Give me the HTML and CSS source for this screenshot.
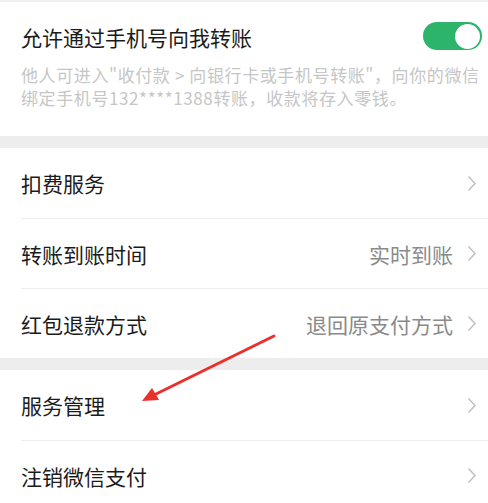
FILE: index.html
```html
<!DOCTYPE html>
<html lang="zh">
<head>
<meta charset="utf-8">
<link rel="stylesheet" href="styles.css">
</head>
<body>
<div class="page">
  <div class="topline"></div>
  <section class="card intro">
    <div class="intro-head">
      <div class="title">允许通过手机号向我转账</div>
      <div class="toggle"><div class="knob"></div></div>
    </div>
    <p class="desc">他人可进入"收付款 &gt; 向银行卡或手机号转账"，向你的微信绑定手机号132****1388转账，收款将存入零钱。</p>
  </section>
  <div class="gap"></div>
  <section class="card">
    <div class="row"><span class="label">扣费服务</span><span class="right"><svg class="chev" viewBox="0 0 10 17"><path d="M1.5 1.5 L8 8.5 L1.5 15.5"/></svg></span></div>
    <div class="row"><span class="label">转账到账时间</span><span class="right"><span class="value">实时到账</span><svg class="chev" viewBox="0 0 10 17"><path d="M1.5 1.5 L8 8.5 L1.5 15.5"/></svg></span></div>
    <div class="row"><span class="label">红包退款方式</span><span class="right"><span class="value">退回原支付方式</span><svg class="chev" viewBox="0 0 10 17"><path d="M1.5 1.5 L8 8.5 L1.5 15.5"/></svg></span></div>
  </section>
  <div class="gap"></div>
  <section class="card">
    <div class="row"><span class="label">服务管理</span><span class="right"><svg class="chev" viewBox="0 0 10 17"><path d="M1.5 1.5 L8 8.5 L1.5 15.5"/></svg></span></div>
    <div class="row"><span class="label">注销微信支付</span><span class="right"><svg class="chev" viewBox="0 0 10 17"><path d="M1.5 1.5 L8 8.5 L1.5 15.5"/></svg></span></div>
  </section>
  <svg class="arrow" width="488" height="503" viewBox="0 0 488 503">
    <line x1="274" y1="336" x2="154" y2="395" stroke="#e8302c" stroke-width="3" stroke-linecap="round"/>
    <polygon points="142,401 152,388 159,400" fill="#e8302c"/>
  </svg>
</div>
</body>
</html>
```
FILE: styles.css
```css
html, body {
  margin: 0;
  padding: 0;
  background: #ffffff;
}
body {
  font-family: "Noto Sans CJK SC", "Noto Sans", sans-serif;
  width: 488px;
  height: 503px;
  overflow: hidden;
}
.page {
  position: relative;
  width: 488px;
  height: 503px;
  overflow: hidden;
}
.topline {
  height: 2px;
  background: #efefef;
}
.card {
  background: #ffffff;
}
.intro {
  padding: 20px 6px 27px 21px;
}
.intro-head {
  display: flex;
  align-items: center;
  justify-content: space-between;
  height: 30px;
}
.title {
  font-size: 21px;
  line-height: 30px;
  color: #1b1b1b;
}
.toggle {
  width: 59px;
  height: 28px;
  border-radius: 14px;
  background: #2bb46a;
  display: flex;
  align-items: center;
  justify-content: flex-end;
  padding: 0 2px;
  box-sizing: border-box;
  margin-top: -2px;
}
.knob {
  width: 25px;
  height: 25px;
  border-radius: 50%;
  background: #ffffff;
}
.desc {
  margin: 11px 0 0 0;
  font-size: 17px;
  line-height: 23px;
  letter-spacing: 0.6px;
  color: #c6c6c6;
}
.gap {
  height: 12px;
  background: #ededed;
}
.row {
  height: 70px;
  display: flex;
  align-items: center;
  justify-content: space-between;
  margin-left: 21px;
  padding-right: 11px;
  border-top: 1px solid #ededed;
  box-sizing: border-box;
}
.card .row:first-child {
  border-top: none;
}
.label {
  font-size: 21px;
  color: #1b1b1b;
}
.right {
  display: flex;
  align-items: center;
  gap: 14px;
}
.value {
  font-size: 21px;
  color: #8a8a8a;
}
.chev {
  width: 10px;
  height: 17px;
  fill: none;
  stroke: #c2c2c2;
  stroke-width: 1.6;
}
.arrow {
  position: absolute;
  left: 0;
  top: 0;
  pointer-events: none;
}
```
